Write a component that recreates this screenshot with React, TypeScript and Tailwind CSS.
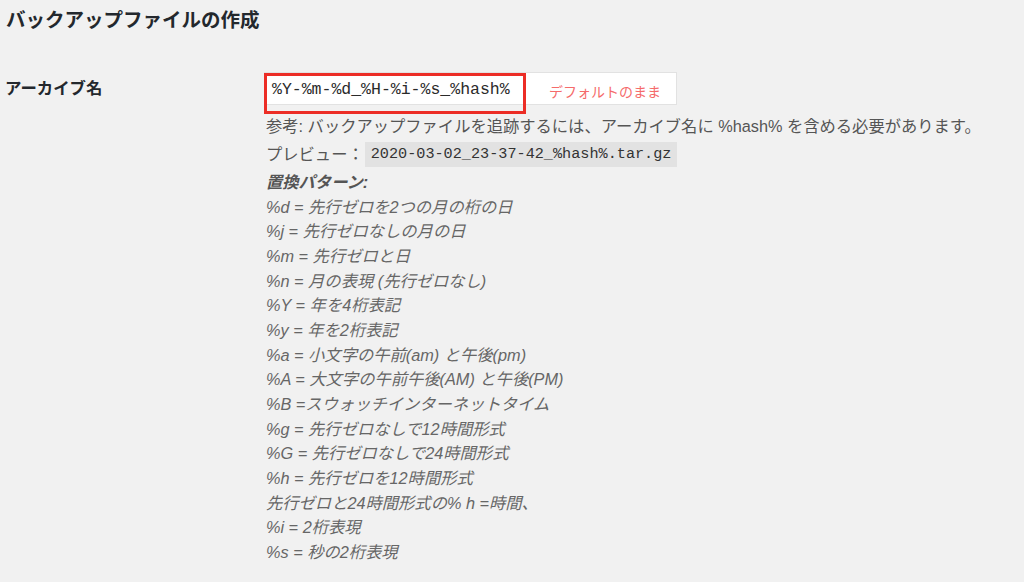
const PATTERNS = [
  '%d = 先行ゼロを2つの月の桁の日',
  '%j = 先行ゼロなしの月の日',
  '%m = 先行ゼロと日',
  '%n = 月の表現 (先行ゼロなし)',
  '%Y = 年を4桁表記',
  '%y = 年を2桁表記',
  '%a = 小文字の午前(am) と午後(pm)',
  '%A = 大文字の午前午後(AM) と午後(PM)',
  '%B =スウォッチインターネットタイム',
  '%g = 先行ゼロなしで12時間形式',
  '%G = 先行ゼロなしで24時間形式',
  '%h = 先行ゼロを12時間形式',
  '先行ゼロと24時間形式の% h =時間、',
  '%i = 2桁表現',
  '%s = 秒の2桁表現',
]

const sans = "font-['Liberation_Sans','Noto_Sans_CJK_JP',sans-serif]"
const mono = "font-['Liberation_Mono','Noto_Sans_CJK_JP',monospace]"

export default function App() {
  return (
    <div className={`min-h-screen w-[1024px] h-[582px] overflow-hidden bg-[#f1f1f1] text-[#444] ${sans}`}>
      <h2 className="pl-[6px] pt-[6px] text-[19.5px] leading-[28px] font-bold text-[#23282d]">
        バックアップファイルの作成
      </h2>

      <div className="flex mt-[38px]">
        {/* label column */}
        <div className="w-[264px] pl-[5px] pt-[2px] text-[16.4px] leading-[28px] font-bold text-[#23282d]">
          アーカイブ名
        </div>

        {/* field column */}
        <div className="flex-1">
          <div className="relative w-[413px]">
            <div className="flex items-center h-[33px] bg-white border border-[#e2e2e2]">
              <span className={`pl-[7px] pt-[3px] text-[16.5px] text-[#2a2a2a] ${mono}`}>%Y-%m-%d_%H-%i-%s_%hash%</span>
              <span className="ml-auto mr-[15px] mt-[8px] text-[14px] text-[#f56b6b]">デフォルトのまま</span>
            </div>
            {/* red annotation box */}
            <div className="absolute left-0 top-[1px] w-[262px] h-[41px] border-[3px] border-[#ec2d26]" />
          </div>

          <p className="mt-[9px] pl-[2px] text-[16.3px] leading-[24px] text-[#555]">
            参考: バックアップファイルを追跡するには、アーカイブ名に %hash% を含める必要があります。
          </p>

          <div className="flex items-center mt-[4px] pl-[2px] text-[16.3px] leading-[25px] text-[#555]">
            <span>プレビュー：</span>
            <code className={`ml-[1px] px-[6px] bg-[#e2e2e2] text-[15.2px] leading-[25px] text-[#333] ${mono}`}>
              2020-03-02_23-37-42_%hash%.tar.gz
            </code>
          </div>

          <div className="mt-[3px] pl-[2px] text-[16.3px] leading-[24.65px] italic text-[#666]">
            <div className="font-bold text-[#555]">置換パターン:</div>
            {PATTERNS.map((p) => (
              <div key={p}>{p}</div>
            ))}
          </div>
        </div>
      </div>
    </div>
  )
}
